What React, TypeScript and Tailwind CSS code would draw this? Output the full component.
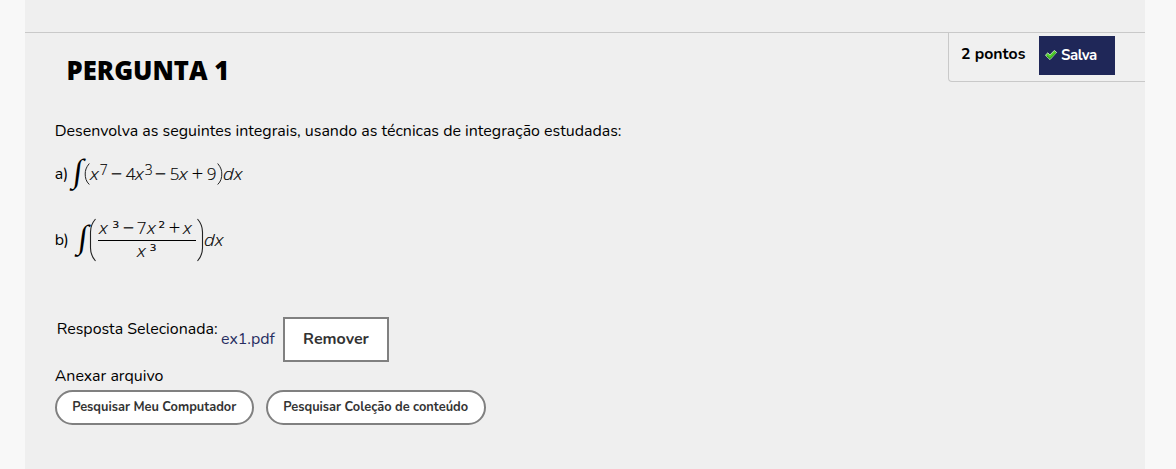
import React from "react";

const body = "font-['Nunito','Open_Sans',sans-serif] text-black whitespace-nowrap";
const math = "font-['Open_Sans',sans-serif] font-light text-black whitespace-nowrap [-webkit-text-stroke:0.15px_black]";
const sup = "font-['DejaVu_Sans'] text-[9.5px] font-normal -mt-[3px] scale-x-110";
const variable = "origin-left scale-x-110 italic";

function Check() {
  return (
    <svg width="12" height="10" viewBox="0 0 12 10" className="shrink-0">
      <path d="M0.4 5.2 2.8 2.8 4.9 5 9.3 0.4 11.6 2.4 5 9.6Z" fill="#54d02c" stroke="#d8efd2" strokeWidth="0.8" />
      <path d="M2 6 5 8.4 10.8 2.8" fill="none" stroke="#219a10" strokeWidth="1" />
    </svg>
  );
}

function Integral() {
  return (
    <span className="flex h-[34px] w-[14px] shrink-0 items-center justify-center [-webkit-text-stroke:0]">
      <span className="block translate-x-[1.5px] -translate-y-[3.5px] -skew-x-[7deg] font-['Liberation_Serif'] text-[33px] font-normal leading-none">∫</span>
    </span>
  );
}

function SmallParen({ flip }: { flip?: boolean }) {
  return (
    <svg width="6" height="24" viewBox="0 0 6 24" className={`shrink-0 -mt-[1px] ${flip ? "-scale-x-100" : ""}`}>
      <path d="M5.3 1.5C2 5.5 1.2 8.5 1.2 12S2 19.5 5.3 22.5" fill="none" stroke="#222" strokeWidth="1" />
    </svg>
  );
}

function LargeParen({ flip }: { flip?: boolean }) {
  return (
    <svg width="8" height="44" viewBox="0 0 8 44" className={`shrink-0 ${flip ? "-scale-x-100" : ""}`}>
      <path d="M6.5 1C3 5 1.5 9 1.5 14V30C1.5 35 3 39 6.5 43" fill="none" stroke="#222" strokeWidth="1.1" />
    </svg>
  );
}

function Term({ className, children }: { className: string; children: React.ReactNode }) {
  return <span className={`block shrink-0 ${className}`}>{children}</span>;
}

function FormulaA() {
  return (
    <div className={`flex h-[34px] items-center text-[17px] leading-[34px] ${math}`}>
      <Integral />
      <SmallParen />
      <Term className={`w-[10px] ${variable}`}>x</Term>
      <Term className="w-[11px] text-[14px] -mt-[9px]">7</Term>
      <Term className="w-[15px] text-[20px]">−</Term>
      <Term className="w-[9px]">4</Term>
      <Term className={`w-[10px] ${variable}`}>x</Term>
      <Term className="w-[10px] text-[14px] -mt-[9px]">3</Term>
      <Term className="w-[15px] text-[20px]">−</Term>
      <Term className="w-[9px]">5</Term>
      <Term className={`w-[13px] ${variable}`}>x</Term>
      <Term className="w-[15px] text-[20px]">+</Term>
      <Term className="w-[10px]">9</Term>
      <SmallParen flip />
      <Term className={variable}>dx</Term>
    </div>
  );
}

function FormulaB() {
  return (
    <div className={`flex h-[46px] items-center text-[17px] leading-[20px] ${math}`}>
      <Integral />
      <LargeParen />
      <div className="ml-[1px] flex w-[98px] flex-col">
        <div className="flex h-[23px] border-b border-black pl-[1px]">
          <Term className={`w-[14px] ${variable}`}>x</Term>
          <Term className={`w-[10px] ${sup}`}>3</Term>
          <Term className="w-[14px] text-[20px]">−</Term>
          <Term className="w-[10px]">7</Term>
          <Term className={`w-[12px] ${variable}`}>x</Term>
          <Term className={`w-[10px] ${sup}`}>2</Term>
          <Term className="w-[14px] text-[20px]">+</Term>
          <Term className={variable}>x</Term>
        </div>
        <div className="flex h-[21px] pl-[39px]">
          <Term className={`w-[13px] ${variable}`}>x</Term>
          <Term className={sup}>3</Term>
        </div>
      </div>
      <LargeParen flip />
      <Term className={variable}>dx</Term>
    </div>
  );
}

export default function App() {
  return (
    <div className={`h-[469px] overflow-hidden bg-[#f8f8f8] pl-[25px] pr-[31px] text-[15.96px] ${body}`}>
      <main className="h-full bg-[#efefef] pt-8">
        <section className="border-t border-[#c9c9c9]">
          <header className="flex h-[76px] items-start justify-between pl-[41.6px]">
            <h1 className="mt-[18px] font-['Open_Sans'] text-[25.6px] font-extrabold leading-[40px]">PERGUNTA 1</h1>
            <div className="flex h-[49px] w-[197px] rounded-bl border-b border-l border-[#c9c9c9] bg-[#f0f0f0] pl-3 pt-[3px]">
              <span className="w-[78px] shrink-0 text-[15.8px] font-bold leading-9">2 pontos</span>
              <span className="flex h-[39px] w-[76px] items-center gap-1 bg-[#1f2758] pl-[6px] text-[15px] font-bold tracking-[-0.5px] text-white">
                <span className="mb-[2px]"><Check /></span>
                <span>Salva</span>
              </span>
            </div>
          </header>
          <div className="pl-[29.7px]">
            <p className="mt-[10px] h-6 leading-6">Desenvolva as seguintes integrais, usando as técnicas de integração estudadas:</p>
            <div className="mt-[14px] flex h-[34px] items-center">
              <span className="mt-[2px] w-[15px] shrink-0">a)</span>
              <FormulaA />
            </div>
            <div className="mt-[26px] flex h-[46px] items-center">
              <span className="mt-[2px] w-[20px] shrink-0">b)</span>
              <FormulaB />
            </div>
            <div className="mt-[54px] flex h-[45px] pl-[2px]">
              <span className="w-[164.3px] shrink-0 leading-[24px]">Resposta Selecionada:</span>
              <a className="w-[62px] shrink-0 leading-[44px] text-[#262c60]">ex1.pdf</a>
              <button className="h-[45px] w-[106px] border-2 border-[#808080] bg-white pb-[2px] text-[16px] font-bold text-[#333]">Remover</button>
            </div>
            <p className="mt-[3px] h-[25px] leading-[22px]">Anexar arquivo</p>
            <div className="flex gap-3">
              <button className="h-[35px] w-[199px] rounded-full border-2 border-[#808080] bg-white text-[12.8px] font-bold text-[#333]">Pesquisar Meu Computador</button>
              <button className="h-[35px] w-[220px] rounded-full border-2 border-[#808080] bg-white text-[12.8px] font-bold text-[#333]">Pesquisar Coleção de conteúdo</button>
            </div>
          </div>
        </section>
      </main>
    </div>
  );
}
